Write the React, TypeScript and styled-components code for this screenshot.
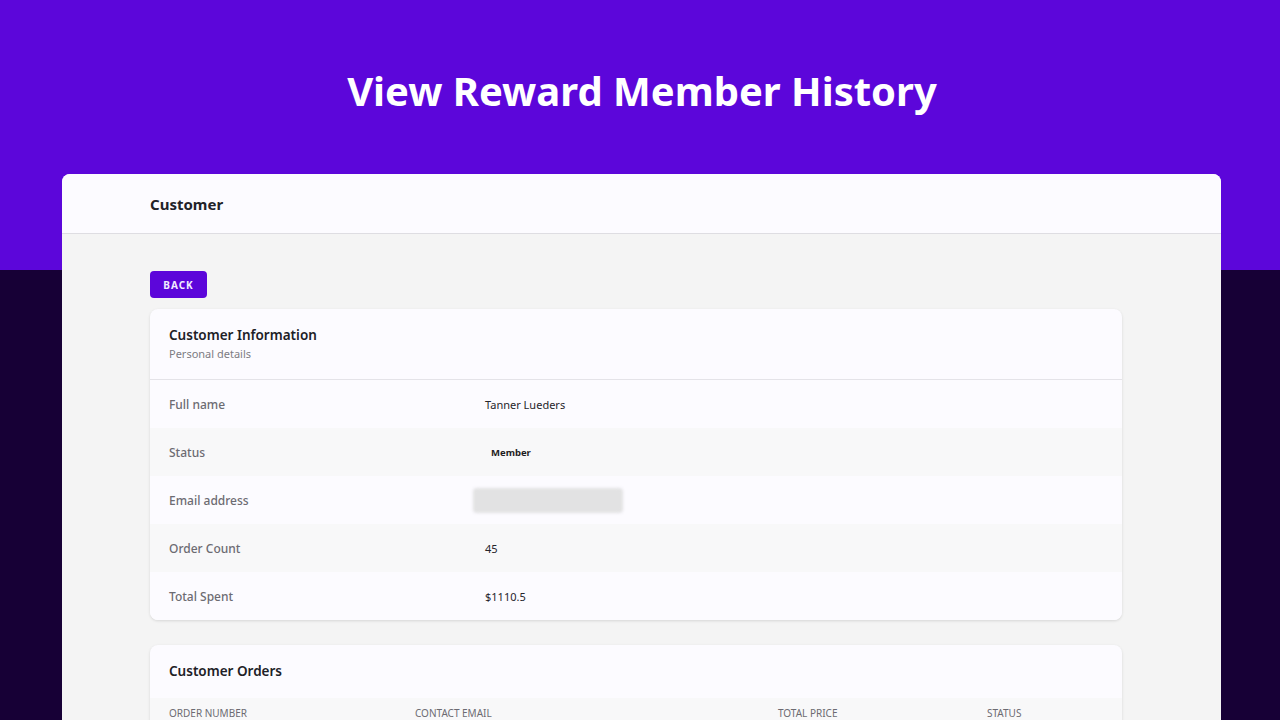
import React from 'react';
import styled, { createGlobalStyle } from 'styled-components';

const GlobalStyle = createGlobalStyle`
  html, body {
    margin: 0;
    padding: 0;
  }
  body {
    font-family: 'Noto Sans', 'Open Sans', sans-serif;
    background: linear-gradient(#5c06da 0, #5c06da 270px, #170036 270px);
    min-height: 720px;
    overflow: hidden;
  }
`;

const Page = styled.div`
  height: 720px;
  overflow: hidden;
`;

const Hero = styled.h1`
  margin: 0;
  height: 174px;
  box-sizing: border-box;
  padding-top: 63px;
  text-align: center;
  color: #ffffff;
  font-size: 40px;
  font-weight: 700;
  line-height: 56px;
  padding-left: 4px;
`;

const Frame = styled.div`
  margin-left: 62px;
  width: 1159px;
  border-radius: 8px 8px 0 0;
  background: #f4f4f4;
  overflow: hidden;
  min-height: 600px;
`;

const FrameHeader = styled.div`
  height: 60px;
  box-sizing: border-box;
  background: #fcfbff;
  border-bottom: 1px solid #dedde2;
  display: flex;
  align-items: center;
  padding-left: 88px;
`;

const FrameTitle = styled.h2`
  margin: 0;
  font-size: 15px;
  font-weight: 700;
  color: #222228;
`;

const Content = styled.div`
  width: 972px;
  margin-left: 88px;
  padding-top: 37px;
  display: flex;
  flex-direction: column;
  align-items: flex-start;
`;

const BackButton = styled.button`
  height: 27px;
  width: 57px;
  border: none;
  border-radius: 4px;
  background: #5c06da;
  color: #f2ecff;
  font-family: inherit;
  font-size: 10px;
  font-weight: 700;
  letter-spacing: 1px;
  cursor: pointer;
  margin-bottom: 11px;
`;

const Card = styled.section<{ $gap?: number }>`
  width: 100%;
  background: #fcfbff;
  border-radius: 8px;
  box-shadow: 0 1px 3px rgba(0, 0, 0, 0.12);
  overflow: hidden;
  margin-bottom: ${(p) => p.$gap ?? 0}px;
`;

const CardHeader = styled.div<{ $bordered?: boolean }>`
  padding: 16px 19px 17px;
  border-bottom: ${(p) => (p.$bordered ? '1px solid #e4e3e8' : 'none')};
`;

const CardTitle = styled.h3`
  margin: 0;
  font-size: 13.5px;
  font-weight: 600;
  line-height: 20px;
  color: #202026;
`;

const CardSubtitle = styled.p`
  margin: 1px 0 0;
  font-size: 11px;
  line-height: 16px;
  color: #7d7c83;
`;

const InfoRow = styled.div<{ $shaded?: boolean }>`
  display: grid;
  grid-template-columns: 316px 1fr;
  align-items: center;
  height: 48px;
  padding: 0 19px;
  background: ${(p) => (p.$shaded ? '#f8f8f9' : '#fcfbff')};
`;

const Label = styled.span`
  font-size: 12px;
  font-weight: 500;
  color: #6c6b72;
`;

const Value = styled.span`
  font-size: 11px;
  color: #26252b;
`;

const Badge = styled.span`
  justify-self: start;
  margin-left: 6px;
  font-size: 9.5px;
  font-weight: 700;
  color: #1e1d22;
`;

const Blurred = styled.span`
  justify-self: start;
  margin-left: -12px;
  width: 150px;
  height: 25px;
  border-radius: 4px;
  background: #e2e2e3;
  filter: blur(1.5px);
`;

const TableHead = styled.div`
  display: grid;
  grid-template-columns: 246px 363px 209px 1fr;
  background: #f8f8f9;
  padding: 8px 19px 0;
  height: 40px;
`;

const HeadCell = styled.span`
  font-size: 10px;
  color: #6c6b72;
  text-transform: uppercase;
`;

const rows: { label: string; value: React.ReactNode; kind?: 'badge' | 'blur' }[] = [
  { label: 'Full name', value: 'Tanner Lueders' },
  { label: 'Status', value: 'Member', kind: 'badge' },
  { label: 'Email address', value: '', kind: 'blur' },
  { label: 'Order Count', value: '45' },
  { label: 'Total Spent', value: '$1110.5' },
];

export default function App() {
  return (
    <Page>
      <GlobalStyle />
      <Hero>View Reward Member History</Hero>
      <Frame>
        <FrameHeader>
          <FrameTitle>Customer</FrameTitle>
        </FrameHeader>
        <Content>
          <BackButton>BACK</BackButton>
          <Card $gap={25}>
            <CardHeader $bordered>
              <CardTitle>Customer Information</CardTitle>
              <CardSubtitle>Personal details</CardSubtitle>
            </CardHeader>
            {rows.map((row, i) => (
              <InfoRow key={row.label} $shaded={i % 2 === 1}>
                <Label>{row.label}</Label>
                {row.kind === 'badge' ? (
                  <Badge>{row.value}</Badge>
                ) : row.kind === 'blur' ? (
                  <Blurred />
                ) : (
                  <Value>{row.value}</Value>
                )}
              </InfoRow>
            ))}
          </Card>
          <Card>
            <CardHeader>
              <CardTitle>Customer Orders</CardTitle>
            </CardHeader>
            <TableHead>
              <HeadCell>Order Number</HeadCell>
              <HeadCell>Contact Email</HeadCell>
              <HeadCell>Total Price</HeadCell>
              <HeadCell>Status</HeadCell>
            </TableHead>
          </Card>
        </Content>
      </Frame>
    </Page>
  );
}
